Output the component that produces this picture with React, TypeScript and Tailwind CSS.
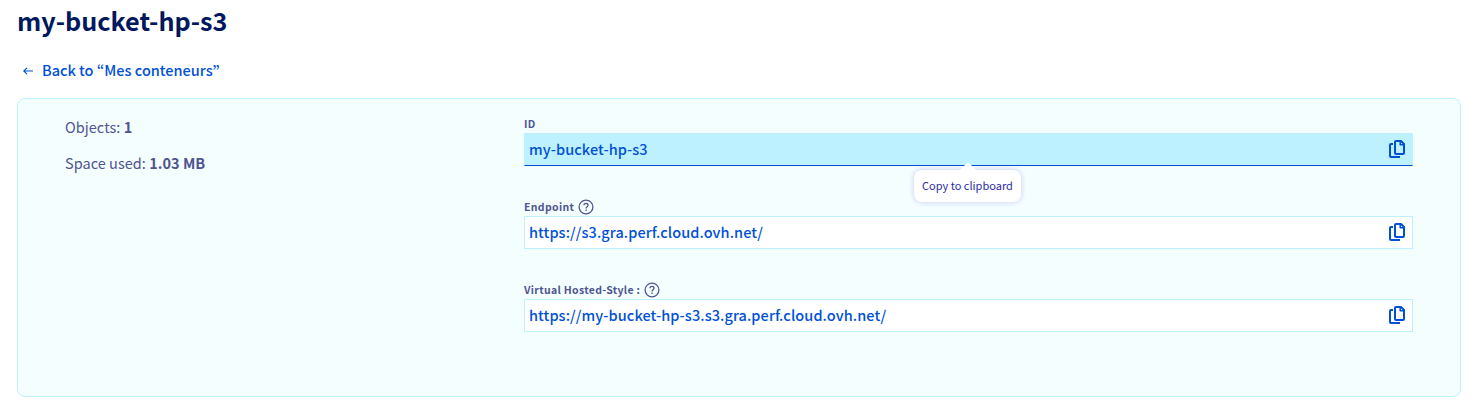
import type { ReactNode } from "react";

function CopyIcon() {
  return (
    <svg className="block h-[18px] w-4 shrink-0" viewBox="0 0 16 18" fill="none" stroke="#0050d7" strokeWidth="2" strokeLinejoin="round">
      <path d="M7 1h5l3 3v9a1 1 0 0 1-1 1H7a1 1 0 0 1-1-1V2a1 1 0 0 1 1-1Z" />
      <path d="M11.200 1.500v3.300h3.300" strokeWidth="1.500" />
      <path d="M4 4H2a1 1 0 0 0-1 1v11a1 1 0 0 0 1 1h9" />
    </svg>
  );
}

function HelpIcon() {
  return (
    <svg className="block size-4 shrink-0" viewBox="0 0 16 16" fill="none" stroke="#4d5592" strokeWidth="1.3">
      <circle cx="8" cy="8" r="6.9" />
      <path d="M6 6.3C6 5 6.9 4.4 8 4.4s2 .7 2 1.8C10 7.7 8.1 7.7 8.1 9.4" />
      <path d="M8.1 10.5v1.4" />
    </svg>
  );
}

type FieldProps = { label: string; value: string; help?: boolean; active?: boolean; children?: ReactNode };

function Field({ label, value, help, active, children }: FieldProps) {
  return (
    <div className="relative h-[83px]">
      <div className="flex h-[18px] items-center gap-1 text-[10.5px] font-bold tracking-[0.32px] text-[#4d5592]">
        <span>{label}</span>
        {help && <HelpIcon />}
      </div>
      <div
        className={
          active
            ? "flex h-[33px] items-center justify-between border border-[#bef1ff] border-b-[#0050d7] bg-[#bef1ff] pr-[7px] pb-0.5 pl-1"
            : "flex h-[33px] items-center justify-between border border-[#bef1ff] bg-white pr-[7px] pb-0.5 pl-1"
        }
      >
        <span className="text-[14.5px] font-medium tracking-[0.085px] text-[#0050d7]">{value}</span>
        <CopyIcon />
      </div>
      {children}
    </div>
  );
}

function Tooltip() {
  return (
    <div className="absolute top-[55px] left-[390px] flex h-8 w-[107px] items-center justify-center rounded-lg bg-white pb-0.5 text-[11px] text-[#2a2ba8] shadow-[0_0_6px_rgba(0,14,156,0.2)]">
      <span className="absolute -top-[8px] left-[46px] h-2 w-4 bg-white [clip-path:polygon(50%_0,100%_100%,0_100%)]" />
      Copy to clipboard
    </div>
  );
}

export default function App() {
  return (
    <main className="h-[413px] overflow-hidden bg-white px-[17px] font-['Noto_Sans_CJK_KR','Noto_Sans',sans-serif]">
      <h1 className="flex h-11 items-center pb-0.5 text-[25.2px] font-bold text-[#00185e]">my-bucket-hp-s3</h1>
      <a className="mt-[14px] flex h-[26px] items-center pb-0.5 pl-1.5 text-[14.5px] font-medium text-[#0050d7]">
        <svg className="mt-px mr-[9px] h-2 w-2.5" viewBox="0 0 10 8" fill="none" stroke="currentColor" strokeWidth="1.1">
          <path d="M10 4H.8M4 .8.8 4 4 7.2" />
        </svg>
        Back to “Mes conteneurs”
      </a>
      <section className="mt-[14px] flex h-[299px] w-[1444px] rounded-lg border border-[#bef1ff] bg-[#f5feff] pt-4 pl-[47px]">
        <div className="w-[459px] text-[14.5px] tracking-[0.03px] text-[#4d5592]">
          <p className="flex h-[26px] items-center pb-0.5 whitespace-pre">Objects: <strong>1</strong></p>
          <p className="mt-[10px] flex h-[26px] items-center pb-0.5 whitespace-pre">Space used: <strong>1.03 MB</strong></p>
        </div>
        <div className="w-[889px]">
          <Field label="ID" value="my-bucket-hp-s3" active>
            <Tooltip />
          </Field>
          <Field label="Endpoint" value="https://s3.gra.perf.cloud.ovh.net/" help />
          <Field label="Virtual Hosted-Style :" value="https://my-bucket-hp-s3.s3.gra.perf.cloud.ovh.net/" help />
        </div>
      </section>
    </main>
  );
}
